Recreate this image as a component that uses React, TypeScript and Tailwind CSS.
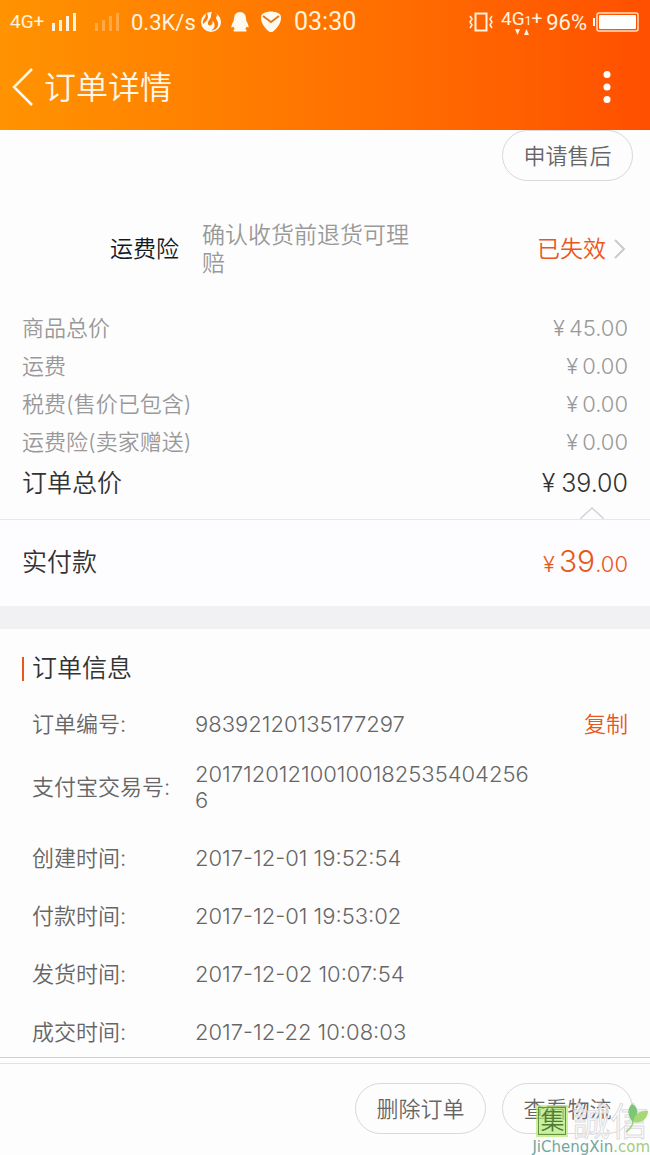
import React from "react";

const PRICE_ROWS = [
  { label: "商品总价", amount: "45.00" },
  { label: "运费", amount: "0.00" },
  { label: "税费(售价已包含)", amount: "0.00" },
  { label: "运费险(卖家赠送)", amount: "0.00" },
];

const TIME_ROWS = [
  { label: "创建时间:", value: "2017-12-01 19:52:54" },
  { label: "付款时间:", value: "2017-12-01 19:53:02" },
  { label: "发货时间:", value: "2017-12-02 10:07:54" },
  { label: "成交时间:", value: "2017-12-22 10:08:03" },
];

const SignalBars: React.FC<{ className?: string }> = ({ className }) => (
  <svg width="27" height="20" viewBox="0 0 27 20" fill="currentColor" className={className}>
    <rect x="1" y="11" width="3" height="8" />
    <rect x="8" y="8" width="3" height="11" />
    <rect x="15" y="4" width="3" height="15" />
    <rect x="22" y="1" width="3" height="18" />
  </svg>
);

const StatusBar: React.FC = () => (
  <div className="flex h-11 items-center justify-between pr-[11px] pl-2.5 font-[Roboto,sans-serif] text-[22px] font-normal text-[#fff3df]">
    <div className="flex items-center">
      <span className="w-[41px] text-[19px] leading-6">4G+</span>
      <SignalBars />
      <SignalBars className="ml-4 opacity-30" />
      <span className="ml-2.5 w-[65px]">0.3K/s</span>
      <svg width="22" height="22" viewBox="0 0 22 22" className="ml-1">
        <circle cx="11" cy="11" r="10" fill="#fffaf0" />
        <path
          d="M13 0c-3 3-1 5-3 8-2 2-3 5-1 6.500 3 0 4-2 3.500-5 3 3 3 8-1.500 10 5 0 8-4 7-8-.5-2-2-3-2-5l1.500-2.500zM7 1C5 5 6 6 4 8c-1 1-1.500 3-1 5 2-2 5-4 5-7 0-2-1-3-1-5z"
          fill="#ff7a00"
        />
      </svg>
      <svg width="20" height="22" viewBox="0 0 20 22" fill="#fffaf0" className="ml-2">
        <path d="M10 1C6 1 4 4 4 8c0 2-2 4-2.500 7-.3 2 .5 2 1.800.5.3 1 .8 1.800 1.500 2.500-1.500.6-1.800 2-.8 2.500h12c1-.5.700-1.900-.8-2.500.7-.7 1.200-1.500 1.500-2.500 1.300 1.500 2.100 1.500 1.800-.5C18 12 16 10 16 8c0-4-2-7-6-7z" />
      </svg>
      <svg width="22" height="22" viewBox="0 0 22 22" className="ml-2.5">
        <path
          d="M4 2c5-2 9-2 14 0 2 1 3 2 3 5 0 6-5 11-8 13.500-1 .7-3 .7-4 0C6 18 1 13 1 7c0-3 1-4 3-5z"
          fill="#fffaf0"
        />
        <path d="M3 5l8 6 8-6" fill="none" stroke="#e07820" strokeWidth="1.800" />
      </svg>
      <span className="ml-3 text-[25px]">03:30</span>
    </div>
    <div className="flex items-center">
      <svg width="24" height="20" viewBox="0 0 24 20" fill="none" stroke="currentColor">
        <rect x="6.500" y="1.500" width="11" height="17" strokeWidth="2" />
        <path d="M1 4l2 3-2 3 2 3-2 3M23 4l-2 3 2 3-2 3 2 3" strokeWidth="1.500" />
      </svg>
      <div className="ml-2 flex flex-col items-center">
        <span className="text-[19px] leading-5">
          4G<span className="text-xs">1</span>+
        </span>
        <svg width="14" height="6" viewBox="0 0 14 6" fill="currentColor">
          <path d="M0 0h5L2.500 6zM9 6h5L11.500 0z" />
        </svg>
      </div>
      <span className="ml-1">96%</span>
      <svg width="46" height="20" viewBox="0 0 46 20" className="ml-1.5">
        <rect x="0" y="6" width="2" height="8" fill="#fff" />
        <rect x="4" y="1" width="41" height="18" rx="2" fill="none" stroke="#ffe0c4" strokeWidth="1.500" />
        <rect x="6" y="3" width="37" height="14" rx="1" fill="#fff" />
      </svg>
    </div>
  </div>
);

const PillButton: React.FC<{ children: React.ReactNode }> = ({ children }) => (
  <button
    type="button"
    className="h-[51px] w-[131px] rounded-full border border-[#d8d7d9] text-[22px] leading-8 text-[#666]"
  >
    {children}
  </button>
);

const Watermark: React.FC = () => (
  <div className="pointer-events-none absolute right-0 bottom-0 flex flex-col items-start">
    <div className="flex items-center">
      <span className="ml-1 flex size-8 items-center justify-center bg-[#b4e874]/70">
        <span className="flex size-7 items-center justify-center border border-[#64913c] text-2xl leading-6 text-[#4f7c35]">
          集
        </span>
      </span>
      <span className="ml-1 text-[38px] leading-9 text-white/70 [-webkit-text-stroke:1px_#dcdce0]">誠信</span>
    </div>
    <span className="font-['DejaVu_Sans',sans-serif] text-[15px] leading-4 font-normal">
      <span className="text-[#72a89c]">JiChengXin</span>
      <span className="text-[#a5cc80]">.com</span>
    </span>
    <svg width="26" height="30" viewBox="0 0 26 30" className="absolute top-0 right-0">
      <path d="M9 19C3 13 3 5 8 1c6 3 8 10 1 18z" fill="#7fc576" />
      <path d="M9 19c1-7 7-12 15-11 0 7-6 13-15 11z" fill="#a6d878" />
      <path d="M9 18c0 5-3 8-7 11" fill="none" stroke="#9fcf79" strokeWidth="1.500" />
    </svg>
  </div>
);

const App: React.FC = () => {
  return (
    <div className="relative min-h-screen w-full bg-[#fefdfe] font-[Inter,'Noto_Sans_CJK_SC',sans-serif] font-[350] text-[#666]">
      <header className="bg-linear-to-r from-[#ff9300] to-[#ff4f00]">
        <StatusBar />
        <div className="flex h-[86px] items-center pr-8 pl-3 text-[#fff8ea]">
          <button type="button" aria-label="返回">
            <svg width="22" height="38" viewBox="0 0 22 38" fill="none" stroke="currentColor" strokeWidth="2.500">
              <path d="M20 1L2 19l18 18" />
            </svg>
          </button>
          <h1 className="ml-2.5 flex-1 pt-0.5 text-[32px] leading-10">订单详情</h1>
          <button type="button" aria-label="更多">
            <svg width="22" height="34" viewBox="0 0 22 34" fill="#fff">
              <circle cx="11" cy="4.500" r="3.500" />
              <circle cx="11" cy="17" r="3.500" />
              <circle cx="11" cy="29.500" r="3.500" />
            </svg>
          </button>
        </div>
      </header>

      <main>
        <div className="flex justify-end pr-[17px]">
          <PillButton>申请售后</PillButton>
        </div>

        {/* Shipping insurance */}
        <a href="#insurance" className="mt-10 flex items-center pr-6 pl-[110px] leading-7">
          <span className="w-[92px] text-[23px] text-[#111a24]">运费险</span>
          <span className="w-[220px] text-[23px] text-[#999]">确认收货前退货可理赔</span>
          <span className="ml-auto text-[23px] text-[#e8571c]">已失效</span>
          <svg width="12" height="22" viewBox="0 0 12 22" fill="none" stroke="#c9c9cb" strokeWidth="2" className="ml-2">
            <path d="M1 2l9 9-9 9" />
          </svg>
        </a>

        {/* Price breakdown */}
        <div className="mt-8 px-[22px] text-[#999]">
          {PRICE_ROWS.map((row) => (
            <div key={row.label} className="flex h-[38px] items-center justify-between text-[22px]">
              <span>{row.label}</span>
              <span className="flex items-center gap-1">
                <span>¥</span>
                <span>{row.amount}</span>
              </span>
            </div>
          ))}
          <div className="flex h-[46px] items-center justify-between text-[25px] text-[#333]">
            <span>订单总价</span>
            <span className="flex items-center gap-1.5">
              <span>¥</span>
              <span>39.00</span>
            </span>
          </div>
        </div>
        <div className="flex justify-end pr-[46px]">
          <svg width="24" height="12" viewBox="0 0 24 12" fill="#fdfcff" stroke="#d3d2d6" strokeWidth="1.500">
            <path d="M0 12L12 1l12 11" />
          </svg>
        </div>
        <div className="flex h-[87px] items-center justify-between border-t border-[#e8e7ea] bg-[#fdfcff] px-[22px]">
          <span className="text-[25px] text-[#333]">实付款</span>
          <span className="flex items-baseline pb-1 text-[22px] text-[#e8571c]">
            <span className="mr-1">¥</span>
            <span className="text-3xl leading-10">39</span>
            <span>.00</span>
          </span>
        </div>
        <div className="h-[23px] bg-[#f1f0f3]" />

        {/* Order info */}
        <section className="pt-7">
          <h2 className="ml-[22px] flex h-6 items-center border-l-2 border-[#e8571c] pl-2 text-[25px] text-[#333]">
            订单信息
          </h2>
          <dl className="-mb-1 mt-3.5 px-[22px] text-[22px] leading-[26px]">
            <div className="flex items-center py-4 pl-2.5">
              <dt className="w-[163px]">订单编号:</dt>
              <dd>98392120135177297</dd>
              <button type="button" className="ml-auto text-[#e8571c]">
                复制
              </button>
            </div>
            <div className="flex items-center pt-2 pb-4 pl-2.5">
              <dt className="w-[163px]">支付宝交易号:</dt>
              <dd className="w-[340px] break-all">2017120121001001825354042566</dd>
            </div>
            {TIME_ROWS.map((row) => (
              <div key={row.label} className="flex items-center py-4 pl-2.5">
                <dt className="w-[163px]">{row.label}</dt>
                <dd>{row.value}</dd>
              </div>
            ))}
          </dl>
        </section>
      </main>

      <footer className="border-t border-[#cfced1]">
        <div className="mt-[5px] flex justify-end gap-4 border-t border-[#e2e1e4] pt-[19px] pr-[17px] pb-5">
          <PillButton>删除订单</PillButton>
          <PillButton>查看物流</PillButton>
        </div>
      </footer>
      <Watermark />
    </div>
  );
};

export default App;
